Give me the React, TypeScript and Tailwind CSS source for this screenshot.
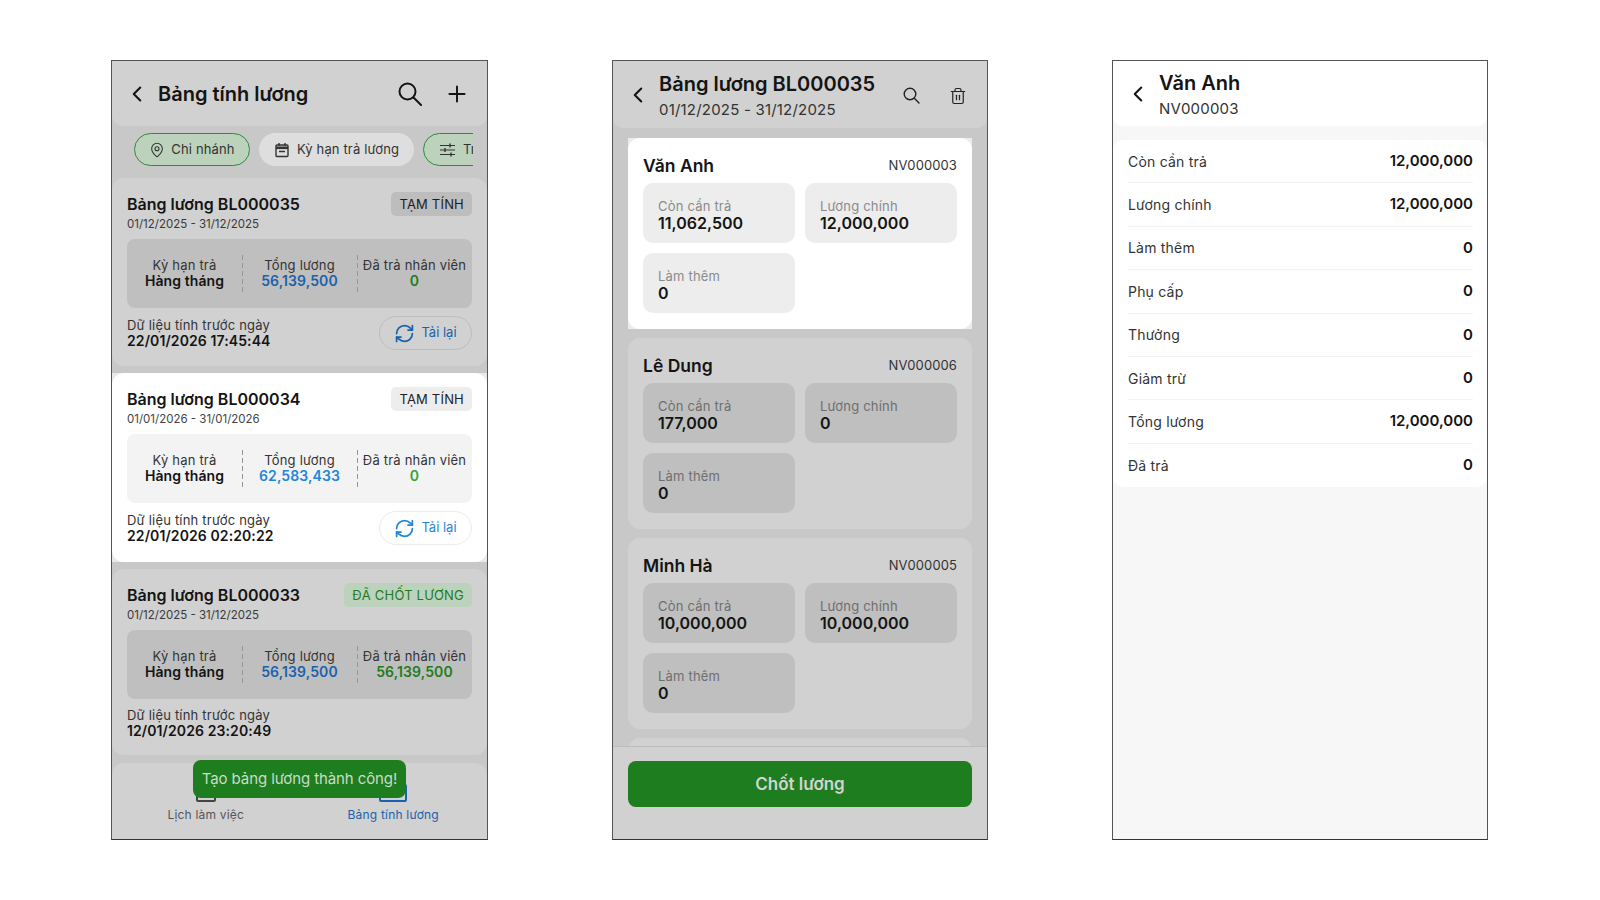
import React from "react";
import { ChevronLeft, Plus, MapPin, RefreshCw, Trash2 } from "lucide-react";

const font = { fontFamily: "Inter, 'Noto Sans', sans-serif" };

function CalIcon() {
  return (
    <svg width="16" height="16" viewBox="0 0 16 16" fill="none" stroke="#333" strokeWidth="1.4" className="shrink-0">
      <rect x="2" y="3" width="12" height="11.5" rx="1" />
      <path d="M2 5.8h12" strokeWidth="2.6" />
      <path d="M5 1v3M11 1v3M5 9.5h6" />
    </svg>
  );
}
function TuneIcon() {
  return (
    <svg width="17" height="16" viewBox="0 0 17 16" fill="none" stroke="#333" strokeWidth="1.2" className="shrink-0">
      <path d="M1 3.5h15M1 8h15M1 12.5h15" />
      <path d="M11 1.5v4M6 6v4M12 10.5v4" strokeWidth="1.4" />
    </svg>
  );
}
function BigSearch() {
  return (
    <svg width="24" height="24" viewBox="0 0 24 24" fill="none" stroke="#141414" strokeWidth="2" strokeLinecap="round" className="shrink-0">
      <circle cx="9.5" cy="9.5" r="8" />
      <path d="M15.5 15.5L23 23" />
    </svg>
  );
}
function SmallSearch() {
  return (
    <svg width="17" height="17" viewBox="0 0 17 17" fill="none" stroke="#222" strokeWidth="1.4" strokeLinecap="round" className="shrink-0">
      <circle cx="7" cy="7" r="5.8" />
      <path d="M11.3 11.3L16 16" />
    </svg>
  );
}

type Pay = { code: string; date: string; tag: string; done: boolean; total: string; paid: string; stamp: string; active?: boolean; reload: boolean; h: string };
const pays: Pay[] = [
  { code: "BL000035", date: "01/12/2025 - 31/12/2025", tag: "TẠM TÍNH", done: false, total: "56,139,500", paid: "0", stamp: "22/01/2026 17:45:44", reload: true, h: "h-[188px]" },
  { code: "BL000034", date: "01/01/2026 - 31/01/2026", tag: "TẠM TÍNH", done: false, total: "62,583,433", paid: "0", stamp: "22/01/2026 02:20:22", active: true, reload: true, h: "h-[189px]" },
  { code: "BL000033", date: "01/12/2025 - 31/12/2025", tag: "ĐÃ CHỐT LƯƠNG", done: true, total: "56,139,500", paid: "56,139,500", stamp: "12/01/2026 23:20:49", reload: false, h: "h-[186px]" },
];

const dash = "bg-[repeating-linear-gradient(to_bottom,#969696_0,#969696_5px,transparent_5px,transparent_8px)] bg-no-repeat bg-left bg-[length:1px_100%]";

function PayCard({ p }: { p: Pay }) {
  const a = p.active;
  return (
    <div className={`${p.h} mb-[7px] shrink-0 ${a ? "bg-[#e9e9e9]" : ""}`}>
      <div className={`${a ? "bg-white" : "bg-[#d1d1d1]"} rounded-[12px] h-full px-[15px] pt-[14px]`}>
        <div className="flex justify-between items-start h-[47px]">
          <div>
            <div className="text-[16px] leading-[25px] font-semibold text-[#141414]">Bảng lương {p.code}</div>
            <div className={`text-[11.5px] leading-[14px] ${a ? "text-[#444]" : "text-[#3a3a3a]"}`}>{p.date}</div>
          </div>
          <div className={`h-[24px] px-[8px] rounded-[5px] text-[13px] tracking-[0.2px] leading-[24px] ${p.done ? "bg-[#bcd2bc] text-[#1e7d1e]" : a ? "bg-[#ededed] text-[#222]" : "bg-[#bdbdbd] text-[#1c1c1c]"}`}>{p.tag}</div>
        </div>
        <div className={`grid grid-cols-3 h-[69px] rounded-[8px] items-center ${a ? "bg-[#f3f3f3]" : "bg-[#bfbfbf]"}`}>
          <div className="text-center text-[13px] tracking-[0.2px] leading-[16px] h-[37px] pt-[2px]">
            <div className="text-[#333]">Kỳ hạn trả</div>
            <div className="font-semibold text-[#141414] text-[14px] tracking-[0.1px]">Hàng tháng</div>
          </div>
          <div className={`text-center text-[13px] tracking-[0.2px] leading-[16px] h-[37px] pt-[2px] ${dash}`}>
            <div className="text-[#333]">Tổng lương</div>
            <div className={`font-semibold text-[14px] tracking-[0.1px] ${a ? "text-[#1f86d9]" : "text-[#1b62ad]"}`}>{p.total}</div>
          </div>
          <div className={`text-center text-[13px] tracking-[0.2px] leading-[16px] h-[37px] pt-[2px] whitespace-nowrap ${dash}`}>
            <div className="text-[#333]">Đã trả nhân viên</div>
            <div className={`font-semibold text-[14px] tracking-[0.1px] ${a ? "text-[#35a335]" : "text-[#1e7d1e]"}`}>{p.paid}</div>
          </div>
        </div>
        <div className="flex justify-between items-center mt-[7px]">
          <div className="text-[13px] tracking-[0.2px] leading-[16px] pt-[1px]">
            <div className="text-[#333]">Dữ liệu tính trước ngày</div>
            <div className="font-semibold text-[14px] tracking-[0.1px] text-[#141414]">{p.stamp}</div>
          </div>
          {p.reload && (
            <div className={`w-[93px] h-[34px] mt-[1px] rounded-full border flex items-center justify-center gap-[6px] text-[13px] ${a ? "border-[#ececec] text-[#1f86d9]" : "border-[#bdbdbd] text-[#1b62ad]"}`}>
              <RefreshCw size={21} strokeWidth={2} className="shrink-0" />
              <span>Tải lại</span>
            </div>
          )}
        </div>
      </div>
    </div>
  );
}

function Back() {
  return <ChevronLeft size={26} strokeWidth={1.9} className="text-[#141414] -ml-[3px] shrink-0" />;
}

function Phone1() {
  return (
    <div className="relative w-[377px] h-[780px] border border-[#555] border-b-[#333] bg-[#c8c8c8] overflow-hidden flex flex-col">
      <div className="h-[65px] bg-[#d1d1d1] rounded-b-[10px] flex items-center pl-[15px] pr-[17px] shrink-0">
        <Back />
        <div className="ml-[8px] text-[20px] font-semibold text-[#141414] flex-1">Bảng tính lương</div>
        <div className="mr-[22px] mt-[1px]"><BigSearch /></div>
        <Plus size={26} strokeWidth={1.8} className="text-[#141414]" />
      </div>
      <div className="h-[52px] shrink-0 pt-[7px] pl-[22px] pr-[14px]">
        <div className="flex gap-[9px] overflow-hidden text-[13px] tracking-[0.15px] text-[#333] whitespace-nowrap">
          <div className="h-[33px] w-[116px] shrink-0 rounded-full border border-[#2f8a3a] bg-[#bcd2bc] flex items-center justify-center gap-[6px]">
            <MapPin size={16} strokeWidth={1.6} />Chi nhánh
          </div>
          <div className="h-[33px] w-[155px] shrink-0 rounded-full bg-[#dedede] flex items-center justify-center gap-[7px]">
            <CalIcon />Kỳ hạn trả lương
          </div>
          <div className="h-[33px] w-[100px] shrink-0 rounded-full border border-[#2f8a3a] bg-[#bcd2bc] flex items-center pl-[15px] gap-[7px]">
            <TuneIcon />Trạng thái
          </div>
        </div>
      </div>
      {pays.map((p) => <PayCard key={p.code} p={p} />)}
      <div className="mt-[1px] flex-1 bg-[#d1d1d1] rounded-t-[12px] grid grid-cols-2 text-[12px] tracking-[0.2px] text-center">
        <div className="flex flex-col items-center pt-[21px] text-[#555]">
          <div className="w-[20px] h-[18px] border-2 border-[#444] rounded-[2px] mb-[4px]" />
          <span>Lịch làm việc</span>
        </div>
        <div className="flex flex-col items-center pt-[21px] text-[#1b62ad]">
          <div className="w-[28px] h-[18px] border-2 border-[#1b62ad] rounded-[2px] mb-[4px]" />
          <span>Bảng tính lương</span>
        </div>
      </div>
      <div className="absolute left-[81px] top-[699px] w-[213px] h-[38px] rounded-[8px] bg-[#1e7d1e] text-[#c9dcc9] text-[15px] tracking-[-0.1px] leading-[38px] text-center whitespace-nowrap">Tạo bảng lương thành công!</div>
    </div>
  );
}

function Tile({ label, value, active }: { label: string; value: string; active: boolean }) {
  return (
    <div className={`h-[60px] rounded-[10px] pl-[15px] pt-[15px] ${active ? "bg-[#ededed]" : "bg-[#bfbfbf]"}`}>
      <div className={`text-[13px] tracking-[0.2px] leading-[16px] ${active ? "text-[#8a8a8a]" : "text-[#6e6e6e]"}`}>{label}</div>
      <div className="text-[16px] leading-[19px] font-semibold text-[#141414]">{value}</div>
    </div>
  );
}

const staff = [
  { name: "Văn Anh", id: "NV000003", a: "11,062,500", b: "12,000,000", active: true },
  { name: "Lê Dung", id: "NV000006", a: "177,000", b: "0" },
  { name: "Minh Hà", id: "NV000005", a: "10,000,000", b: "10,000,000" },
];

function Phone2() {
  return (
    <div className="relative w-[376px] h-[780px] border border-[#555] border-b-[#333] bg-[#c8c8c8] overflow-hidden flex flex-col">
      <div className="h-[67px] bg-[#d1d1d1] rounded-b-[10px] flex items-center pl-[15px] pr-[20px] shrink-0">
        <Back />
        <div className="ml-[8px] flex-1 mt-[4px]">
          <div className="text-[20px] leading-[26px] font-semibold text-[#141414]">Bảng lương BL000035</div>
          <div className="text-[15px] tracking-[0.2px] leading-[25px] text-[#333]">01/12/2025 - 31/12/2025</div>
        </div>
        <div className="mr-[29px] mt-[2px]"><SmallSearch /></div>
        <Trash2 size={18} strokeWidth={1.6} className="text-[#222] mt-[2px]" />
      </div>
      <div className="flex-1 min-h-0 overflow-hidden px-[15px] pt-[10px]">
        {staff.map((s) => (
          <div key={s.id} className={`h-[191px] mb-[9px] ${s.active ? "bg-[#ececec]" : ""}`}>
            <div className={`${s.active ? "bg-white" : "bg-[#d1d1d1]"} rounded-[12px] h-full px-[15px] pt-[15px]`}>
              <div className="flex justify-between items-center h-[26px] mb-[4px]">
                <div className="text-[17.5px] font-semibold text-[#141414]">{s.name}</div>
                <div className="text-[13px] tracking-[0.1px] text-[#333]">{s.id}</div>
              </div>
              <div className="grid grid-cols-2 gap-[10px]">
                <Tile label="Còn cần trả" value={s.a} active={!!s.active} />
                <Tile label="Lương chính" value={s.b} active={!!s.active} />
                <Tile label="Làm thêm" value="0" active={!!s.active} />
              </div>
            </div>
          </div>
        ))}
        <div className="h-[20px] bg-[#d1d1d1] rounded-t-[12px]" />
      </div>
      <div className="h-[93px] shrink-0 bg-[#d1d1d1] px-[15px] pt-[14px] border-t border-[#bdbdbd]">
        <div className="h-[46px] rounded-[8px] bg-[#1e7d1e] text-[#d3d3d3] text-[17px] font-semibold leading-[46px] text-center">Chốt lương</div>
      </div>
    </div>
  );
}

const rows: [string, string][] = [
  ["Còn cần trả", "12,000,000"], ["Lương chính", "12,000,000"], ["Làm thêm", "0"], ["Phụ cấp", "0"],
  ["Thưởng", "0"], ["Giảm trừ", "0"], ["Tổng lương", "12,000,000"], ["Đã trả", "0"],
];

function Phone3() {
  return (
    <div className="w-[376px] h-[780px] border border-[#555] border-b-[#333] bg-[#f7f7f7] overflow-hidden flex flex-col">
      <div className="h-[65px] bg-white rounded-b-[10px] flex items-center pl-[15px] shrink-0">
        <Back />
        <div className="ml-[8px] mt-[4px]">
          <div className="text-[20px] leading-[26px] font-semibold text-[#141414]">Văn Anh</div>
          <div className="text-[15px] tracking-[0.2px] leading-[25px] text-[#333]">NV000003</div>
        </div>
      </div>
      <div className="mt-[14px] bg-white rounded-[10px] pl-[15px] pr-[14px]">
        {rows.map(([l, v], i) => (
          <div key={l} className={`h-[43.4px] flex justify-between items-center ${i < 7 ? "border-b border-[#f3f3f3]" : ""}`}>
            <span className="text-[14px] tracking-[0.2px] text-[#333]">{l}</span>
            <span className="text-[15px] font-semibold text-[#141414]">{v}</span>
          </div>
        ))}
      </div>
    </div>
  );
}

export default function App() {
  return (
    <div className="w-[1600px] h-[900px] bg-white flex gap-[124px] pl-[111px] pt-[60px]" style={font}>
      <Phone1 />
      <Phone2 />
      <Phone3 />
    </div>
  );
}
